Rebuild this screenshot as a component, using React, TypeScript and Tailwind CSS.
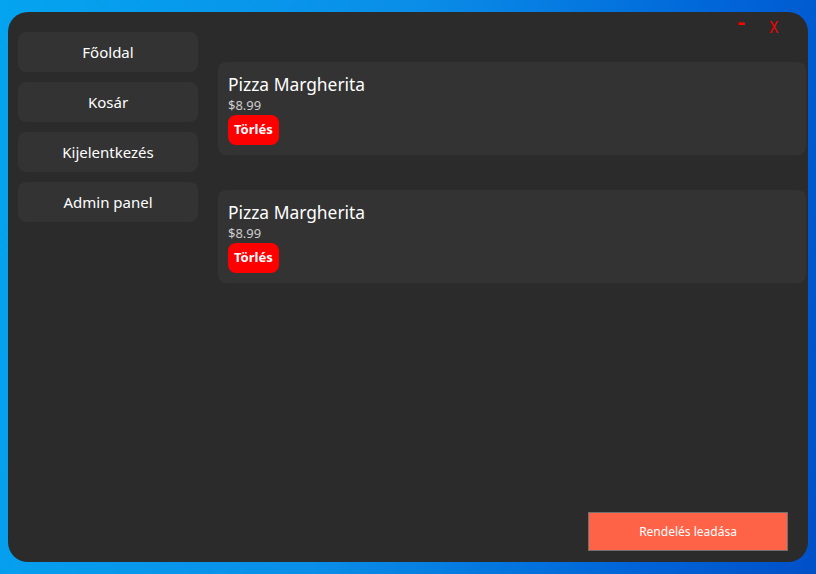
const font = "font-['Segoe_UI','Noto_Sans',sans-serif]";

const menu = ["Főoldal", "Kosár", "Kijelentkezés", "Admin panel"];
const items = [
  { name: "Pizza Margherita", price: "$8.99" },
  { name: "Pizza Margherita", price: "$8.99" },
];

export default function App() {
  return (
    <div className={`h-[574px] w-[816px] overflow-hidden bg-[linear-gradient(100deg,#04a4f0_0%,#0a8ee8_45%,#0064d8_80%,#0050c8_100%)] pl-[8px] pt-[12px] ${font}`}>
      <div className="flex h-[550px] w-[800px] overflow-hidden rounded-[20px] bg-[#2b2b2b]">
        {/* sidebar */}
        <nav className="ml-[10px] mt-[20px] flex w-[180px] flex-col gap-[10px]">
          {menu.map((m) => (
            <button
              key={m}
              className="h-[40px] w-full rounded-[8px] bg-[#333333] pt-[1px] text-[15px] text-white"
            >
              {m}
            </button>
          ))}
        </nav>

        {/* main */}
        <div className="ml-[20px] flex flex-1 flex-col">
          <div className="flex h-[50px] items-start justify-end gap-[23px] pr-[29px] pt-[4px] font-['Liberation_Sans',sans-serif] text-[17px] text-[#ff0000]">
            <span className="scale-x-[1.2] text-[20px] font-bold leading-[12px]">-</span>
            <span className="scale-x-[0.8] leading-[24px]">X</span>
          </div>

          <div className="flex flex-col gap-[35px] pr-[2px]">
            {items.map((it, i) => (
              <div key={i} className="flex flex-col items-start rounded-[8px] bg-[#333333] px-[10px] pb-[10px] pt-[10px]">
                <div className="text-[17.4px] leading-[24px] text-white">{it.name}</div>
                <div className="text-[13px] leading-[18px] text-[#cccccc]">{it.price}</div>
                <button className="mt-[1px] h-[30px] rounded-[8px] bg-[#ff0000] px-[6px] text-[13px] font-bold text-white">
                  Törlés
                </button>
              </div>
            ))}
          </div>

          <div className="mt-auto flex justify-end pb-[11px] pr-[20px]">
            <button className="h-[39px] w-[200px] border border-[#707070] bg-[#ff6347] text-[12px] text-white">
              Rendelés leadása
            </button>
          </div>
        </div>
      </div>
    </div>
  );
}
